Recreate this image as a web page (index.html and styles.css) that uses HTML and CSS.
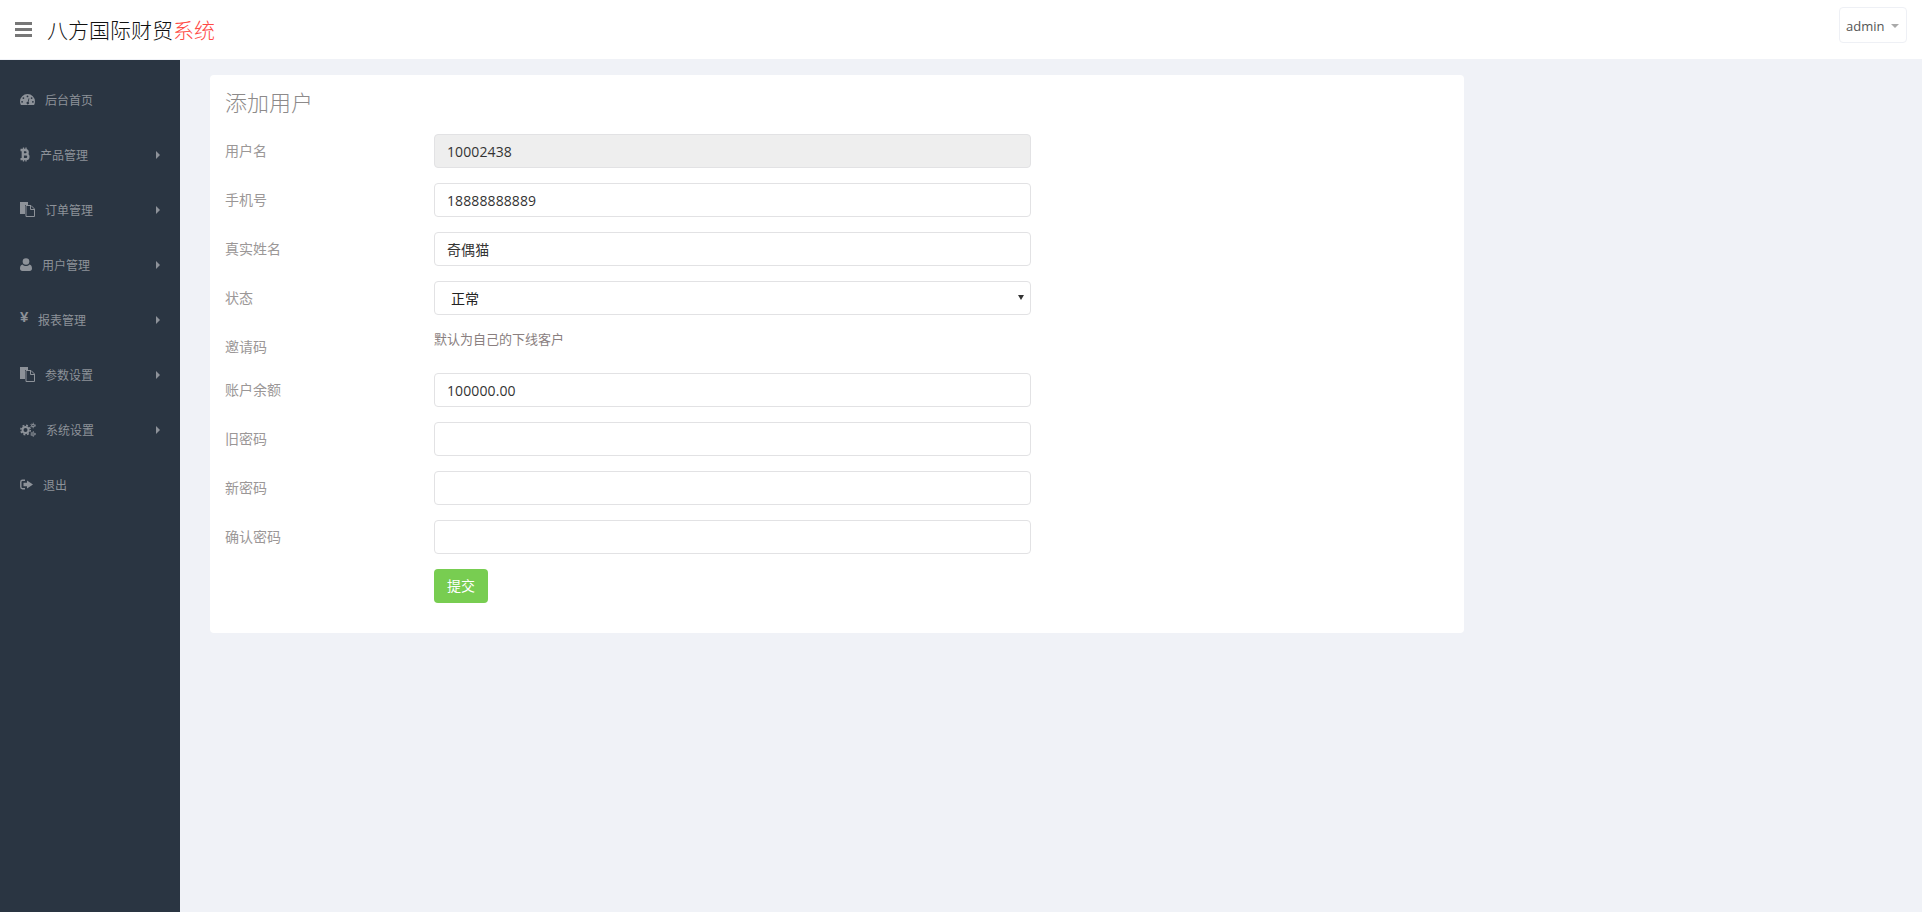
FILE: index.html
```html
<!DOCTYPE html>
<html lang="zh-CN">
<head>
    <meta charset="UTF-8">
    <title>添加用户</title>
    <link rel="stylesheet" href="styles.css">
</head>
<body>
    <header class="topbar">
        <span class="bars"><i></i><i></i><i></i></span>
        <div class="logo">八方国际财贸<span class="logo-red">系统</span></div>
        <button class="user-btn">admin<span class="user-caret"></span></button>
    </header>
    <div class="main">
        <nav class="sidebar">
            <a class="nav-item">
                <svg class="icon" width="15" height="15" viewBox="0 0 15 15"><path fill-rule="evenodd" d="M7.5 2A7.5 7.5 0 0 0 0 9.500C0 10.800.3 12 .9 13h13.200c.6-1 .9-2.200.9-3.500A7.500 7.500 0 0 0 7.500 2zM7.500 3.500a.9.900 0 1 1 0 1.800.900.900 0 0 1 0-1.800zM3.400 5.200a.9.900 0 1 1 0 1.800.900.900 0 0 1 0-1.800zM11.600 5.200a.9.900 0 1 1 0 1.800.900.900 0 0 1 0-1.800zM2.100 8.900a.9.900 0 1 1 0 1.800.900.900 0 0 1 0-1.800zM12.900 8.900a.9.900 0 1 1 0 1.800.900.900 0 0 1 0-1.800zM8.700 6.200l.7.2-.9 3.600a1.300 1.300 0 1 1-.8-.2z"/></svg>
                <span>后台首页</span>
            </a>
            <a class="nav-item">
                <svg class="icon" width="10" height="15" viewBox="0 0 10 15"><path fill="none" stroke="currentColor" stroke-width="2.300" d="M0.500 3h5a2.200 2.200 0 0 1 0 4.400H2.500M2.500 7.400h3.500a2.400 2.400 0 0 1 0 4.800H0.500M2.800 3v9.200"/><path fill="none" stroke="currentColor" stroke-width="1.300" d="M3.500 0.500v2.500M6 0.500v2.500M3.500 12v2.500M6 12v2.500"/></svg>
                <span>产品管理</span>
                <b class="arrow"></b>
            </a>
            <a class="nav-item">
                <svg class="icon" width="15" height="15" viewBox="0 0 15 15"><path d="M0 0h8v3H5v9H0z"/><path d="M6 3.500h5l3.500 3.500v7.500H6z" fill="none" stroke="currentColor"/><path d="M10.500 3.500V7.500h4" fill="none" stroke="currentColor"/></svg>
                <span>订单管理</span>
                <b class="arrow"></b>
            </a>
            <a class="nav-item">
                <svg class="icon" width="12" height="15" viewBox="0 0 12 15"><circle cx="6" cy="4.500" r="3.300"/><path d="M2.500 7.500C3.500 8.600 4.700 9 6 9s2.500-.4 3.500-1.500c1.700.2 2.500 1.700 2.500 4 0 1.500-.9 2.500-2.300 2.500H2.300C.9 14 0 13 0 11.500c0-2.300.8-3.800 2.500-4z"/></svg>
                <span>用户管理</span>
                <b class="arrow"></b>
            </a>
            <a class="nav-item">
                <span class="icon-yen">¥</span>
                <span>报表管理</span>
                <b class="arrow"></b>
            </a>
            <a class="nav-item">
                <svg class="icon" width="15" height="15" viewBox="0 0 15 15"><path d="M0 0h8v3H5v9H0z"/><path d="M6 3.500h5l3.500 3.500v7.500H6z" fill="none" stroke="currentColor"/><path d="M10.500 3.500V7.500h4" fill="none" stroke="currentColor"/></svg>
                <span>参数设置</span>
                <b class="arrow"></b>
            </a>
            <a class="nav-item">
                <svg class="icon" width="16" height="15" viewBox="0 0 16 15"><g fill="none" stroke="currentColor"><circle cx="5.500" cy="8" r="3" stroke-width="2"/><circle cx="5.500" cy="8" r="4.700" stroke-width="1.500" stroke-dasharray="1.900 1.800"/><circle cx="13" cy="3.500" r="1.300" stroke-width="1.100"/><circle cx="13" cy="3.500" r="2.300" stroke-width="1" stroke-dasharray="1.100 1.300"/><circle cx="13" cy="12" r="1.300" stroke-width="1.100"/><circle cx="13" cy="12" r="2.300" stroke-width="1" stroke-dasharray="1.100 1.300"/></g></svg>
                <span>系统设置</span>
                <b class="arrow"></b>
            </a>
            <a class="nav-item">
                <svg class="icon" width="13" height="15" viewBox="0 0 13 15"><path fill="none" stroke="currentColor" stroke-width="1.400" d="M5 3.200H2.500C1.500 3.200.8 3.900.8 4.900v5.200c0 1 .7 1.700 1.700 1.700H5"/><path d="M7 3.500l6 4-6 4V9.300H3.500V5.700H7z"/></svg>
                <span>退出</span>
            </a>
        </nav>
        <section class="content">
            <div class="card">
                <h2 class="card-title">添加用户</h2>
                <div class="form-row">
                    <label>用户名</label>
                    <input class="field" type="text" value="10002438" readonly>
                </div>
                <div class="form-row">
                    <label>手机号</label>
                    <input class="field" type="text" value="18888888889">
                </div>
                <div class="form-row">
                    <label>真实姓名</label>
                    <input class="field" type="text" value="奇偶猫">
                </div>
                <div class="form-row">
                    <label>状态</label>
                    <div class="select-wrap">
                        <select class="field">
                            <option>正常</option>
                        </select>
                    </div>
                </div>
                <div class="form-row form-row-text">
                    <label>邀请码</label>
                    <p class="help">默认为自己的下线客户</p>
                </div>
                <div class="form-row">
                    <label>账户余额</label>
                    <input class="field" type="text" value="100000.00">
                </div>
                <div class="form-row">
                    <label>旧密码</label>
                    <input class="field" type="password">
                </div>
                <div class="form-row">
                    <label>新密码</label>
                    <input class="field" type="password">
                </div>
                <div class="form-row">
                    <label>确认密码</label>
                    <input class="field" type="password">
                </div>
                <div class="form-row">
                    <label></label>
                    <button class="submit-btn">提交</button>
                </div>
            </div>
        </section>
    </div>
</body>
</html>
```

FILE: styles.css
```css
html, body {
    height: 100%;
}

body {
    margin: 0;
    background: #f0f2f7;
    color: #333;
    font-family: "Open Sans", "Noto Sans CJK SC", sans-serif;
    font-size: 14px;
    display: flex;
    flex-direction: column;
    overflow: hidden;
}

.topbar {
    height: 59px;
    margin-bottom: 1px;
    background: #fff;
    display: flex;
    align-items: center;
    padding: 0 15px;
    flex-shrink: 0;
}

.bars {
    width: 17px;
    display: flex;
    flex-direction: column;
    gap: 3px;
    margin-right: 15px;
}

.bars i {
    display: block;
    height: 3px;
    background: #777;
}

.logo {
    font-size: 21px;
    font-weight: 300;
    color: #111;
    margin-top: -2px;
}

.logo-red {
    color: #ff4a45;
}

.user-btn {
    align-self: flex-start;
    margin-top: 7px;
    margin-left: auto;
    width: 68px;
    height: 36px;
    padding: 2px 0 0 6px;
    display: flex;
    align-items: center;
    border: 1px solid #eef0f5;
    border-radius: 4px;
    background: #fff;
    color: #555;
    font-family: inherit;
    font-size: 13px;
}

.user-caret {
    margin-left: 7px;
    border-top: 4px solid #aaa;
    border-left: 4px solid transparent;
    border-right: 4px solid transparent;
}

.main {
    flex: 1;
    display: flex;
    min-height: 0;
}

.sidebar {
    width: 180px;
    background: #2a3542;
    padding-top: 12px;
    box-sizing: border-box;
    flex-shrink: 0;
    color: #8d9299;
    font-size: 12px;
}

.nav-item {
    height: 55px;
    display: flex;
    align-items: center;
    gap: 10px;
    padding: 0 20px;
}

.icon {
    fill: currentColor;
    flex-shrink: 0;
}

.icon-yen {
    width: 8px;
    font-family: "Liberation Sans", sans-serif;
    font-size: 15px;
    font-weight: bold;
    line-height: 14px;
    margin-top: -5px;
}

.arrow {
    margin-left: auto;
    border-left: 4px solid #8d9299;
    border-top: 4px solid transparent;
    border-bottom: 4px solid transparent;
}

.content {
    flex: 1;
    padding: 15px 0 0 30px;
}

.card {
    width: 1254px;
    box-sizing: border-box;
    background: #fff;
    border-radius: 4px;
    padding: 14px 15px 15px;
}

.card-title {
    margin: 0 0 19px;
    font-size: 22px;
    font-weight: 300;
    line-height: 26px;
    color: #8d8a8a;
}

.form-row {
    display: flex;
    margin-bottom: 15px;
}

.form-row label {
    width: 209px;
    flex-shrink: 0;
    padding-top: 7px;
    line-height: 20px;
    color: #9b9797;
}

.form-row-text {
    height: 28px;
}

.field {
    width: 597px;
    height: 34px;
    box-sizing: border-box;
    padding: 0 12px;
    border: 1px solid #e2e2e4;
    border-radius: 4px;
    background-color: #fff;
    color: #333;
    font-family: inherit;
    font-size: 14px;
    letter-spacing: 0.1px;
}

.field[readonly] {
    background-color: #eee;
}

.select-wrap {
    position: relative;
    height: 34px;
}

.select-wrap select {
    appearance: none;
    padding: 0 16px;
    color: #222;
    display: block;
}

.select-wrap::after {
    content: "";
    position: absolute;
    right: 7px;
    top: 14px;
    border-top: 5px solid #333;
    border-left: 3px solid transparent;
    border-right: 3px solid transparent;
}

.help {
    margin: 0;
    font-size: 13px;
    line-height: 18px;
    color: #8a7f7f;
}

.submit-btn {
    width: 54px;
    height: 34px;
    border: none;
    border-radius: 4px;
    background: #78cd51;
    color: #fff;
    font-family: inherit;
    font-size: 14px;
    padding: 0 0 2px;
}
```
